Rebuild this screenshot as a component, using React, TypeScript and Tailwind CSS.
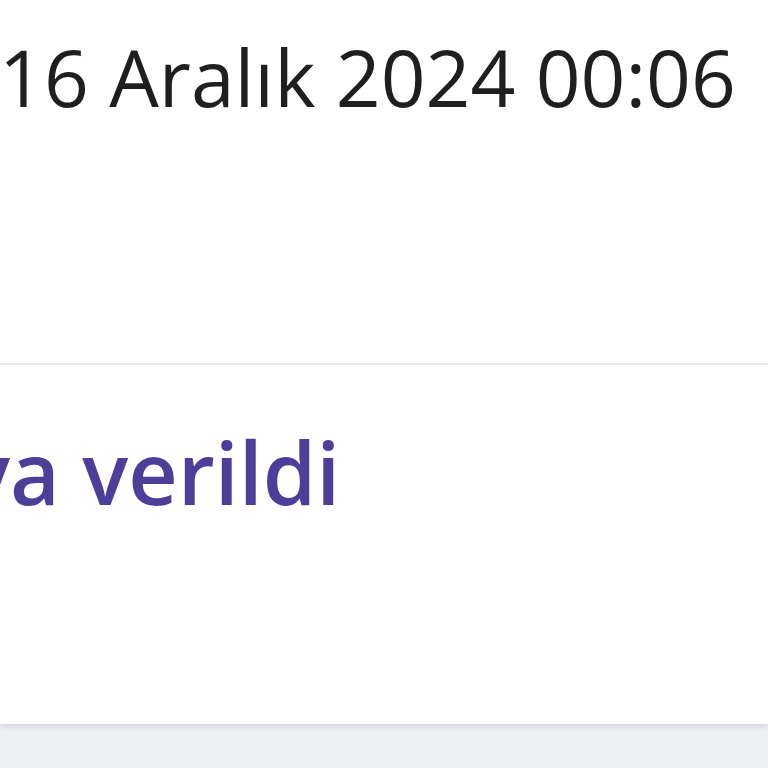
export default function App() {
  return (
    <div className="h-[768px] w-[768px] overflow-hidden bg-[#eceef0] font-['Open_Sans',sans-serif]">
      <div className="h-[724px] bg-white shadow-[0_2px_6px_rgba(90,80,140,0.18)]">
        <div className="h-[363px] overflow-hidden pt-[38px]">
          <div className="-ml-[1px] whitespace-nowrap text-[78.5px] leading-none text-[#1f1f1f]">16 Aralık 2024 00:06</div>
        </div>
        <div className="overflow-hidden border-t-2 border-[#e6e6e6] pt-[64px]">
          <div className="-ml-[36px] whitespace-nowrap text-[86px] font-semibold leading-none text-[#4b3f9a]">ya verildi</div>
        </div>
      </div>
    </div>
  );
}
